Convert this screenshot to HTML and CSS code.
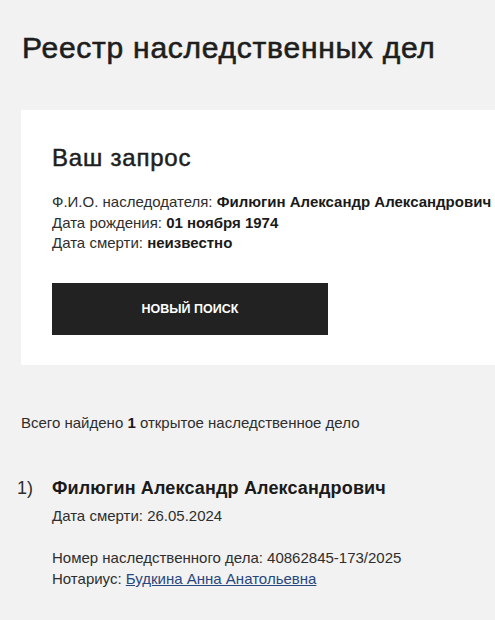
FILE: index.html
```html
<!DOCTYPE html>
<html lang="ru">
<head>
<meta charset="utf-8">
<link rel="stylesheet" href="styles.css">
</head>
<body>
<div class="page">
  <h1 class="title">Реестр наследственных дел</h1>
  <section class="card">
    <h2 class="card-title">Ваш запрос</h2>
    <div class="query">
      <div>Ф.И.О. наследодателя: <b>Филюгин Александр Александрович</b></div>
      <div>Дата рождения: <b>01 ноября 1974</b></div>
      <div>Дата смерти: <b>неизвестно</b></div>
    </div>
    <button class="btn">НОВЫЙ ПОИСК</button>
  </section>
  <p class="total">Всего найдено <b>1</b> открытое наследственное дело</p>
  <ol class="results">
    <li class="result">
      <span class="num">1)</span>
      <div class="result-body">
        <div class="result-name">Филюгин Александр Александрович</div>
        <div class="result-line">Дата смерти: 26.05.2024</div>
        <div class="result-gap"></div>
        <div class="result-line">Номер наследственного дела: 40862845-173/2025</div>
        <div class="result-line">Нотариус: <a class="link" href="#">Будкина Анна Анатольевна</a></div>
      </div>
    </li>
  </ol>
</div>
</body>
</html>
```
FILE: styles.css
```css
html, body {
  margin: 0;
  padding: 0;
  background: #f2f2f2;
  overflow: hidden;
}
body {
  font-family: "Liberation Sans", Arial, sans-serif;
  color: #2e2e2e;
}
.page {
  padding: 0 0 0 21px;
  width: 600px;
}
.title {
  margin: 0;
  padding-top: 30px;
  font-size: 30px;
  font-weight: normal;
  letter-spacing: 0.75px;
  -webkit-text-stroke: 0.6px #1e1e1e;
  color: #1e1e1e;
  line-height: 36px;
  padding-left: 1px;
  height: 80px;
}
.card {
  background: #fff;
  padding: 34px 31px 30px 31px;
  width: 560px;
  box-sizing: border-box;
  height: 255px;
}
.card-title {
  margin: 0;
  font-size: 24px;
  font-weight: normal;
  letter-spacing: 0.8px;
  -webkit-text-stroke: 0.5px #1e1e1e;
  color: #1e1e1e;
  line-height: 28px;
}
.query {
  margin-top: 20px;
  font-size: 15px;
  line-height: 20.5px;
  white-space: nowrap;
}
.query b {
  font-weight: bold;
  color: #1a1a1a;
}
.btn {
  display: flex;
  align-items: center;
  justify-content: center;
  margin-top: 29px;
  width: 276px;
  height: 52px;
  background: #222;
  color: #fff;
  border: 0;
  font-family: "Liberation Sans", Arial, sans-serif;
  font-weight: bold;
  font-size: 12.5px;
  padding: 0;
}
.total {
  margin: 48px 0 0 0;
  font-size: 15px;
  line-height: 20px;
}
.total b {
  color: #1a1a1a;
}
.results {
  list-style: none;
  margin: 44px 0 0 0;
  padding: 0;
}
.result {
  display: flex;
}
.num {
  width: 31px;
  font-size: 18px;
  line-height: 22px;
  margin-left: -4px;
  padding-right: 4px;
}
.result-name {
  font-size: 18px;
  font-weight: bold;
  color: #1a1a1a;
  letter-spacing: 0.15px;
  line-height: 22px;
}
.result-line {
  font-size: 15px;
  line-height: 21px;
}
.result-name + .result-line {
  margin-top: 6px;
}
.result-gap {
  height: 21px;
}
.link {
  color: #28477f;
  text-decoration: underline;
}
```
